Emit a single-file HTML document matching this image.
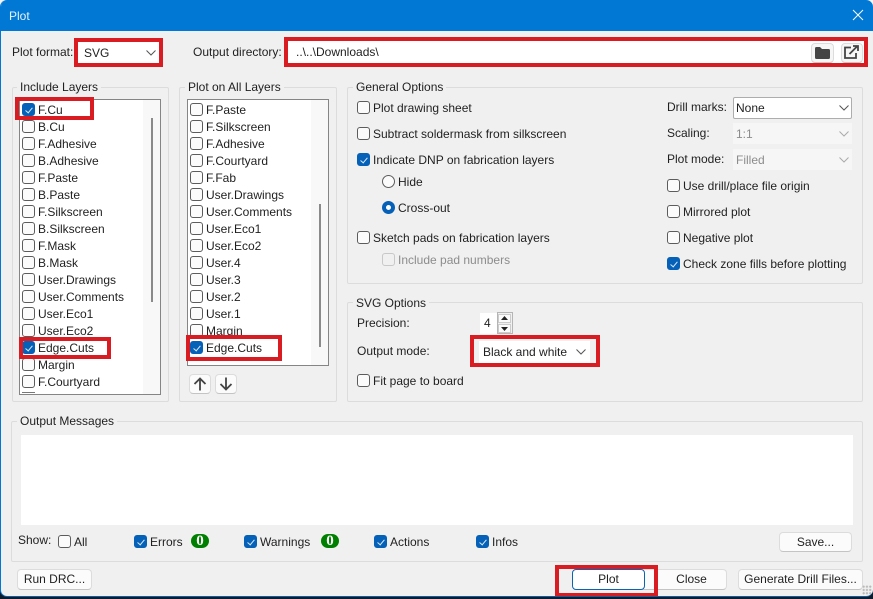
<!DOCTYPE html>
<html><head><meta charset="utf-8"><title>Plot</title>
<style>
html,body{margin:0;padding:0;width:873px;height:599px;overflow:hidden;background:linear-gradient(#f4f4f4 0,#f4f4f4 300px,#0d1b2a 300px)}
*{box-sizing:border-box}
#d{position:absolute;left:0;top:0;width:873px;height:597px;background:#f0f0f0;border-radius:7px;overflow:hidden;border-left:1px solid #0078d4;border-bottom:1px solid #0a5ea8;font-family:"Liberation Sans",sans-serif;font-size:12px;color:#1f1f1f}
#w{position:absolute;left:-1px;top:0;width:873px;height:597px}
.a{position:absolute}
.t{position:absolute;white-space:nowrap;line-height:16px;height:16px}
.c{position:absolute;width:13px;height:13px;border:1px solid #5c5c5c;border-radius:3px;background:#fbfbfb}
.c.on{background:#0560b8;border-color:#0560b8}
.c.on::after{content:"";position:absolute;left:4px;top:2px;width:3px;height:6px;border:solid #dcebf8;border-width:0 1px 1px 0;transform:rotate(40deg)}
.r{position:absolute;width:13px;height:13px;border:1px solid #5c5c5c;border-radius:50%;background:#fbfbfb}
.r.on{background:#fff;border:4px solid #0560b8}
.g{position:absolute;border:1px solid #dcdcdc;border-radius:2px}
.gl{position:absolute;background:#f0f0f0;padding:0 3px;white-space:nowrap;line-height:16px;height:16px}
.l{position:absolute;background:#fff;border:1px solid #858585;overflow:hidden}
.tr{position:absolute;top:0;bottom:0;width:18px;background:#f8f8f8}
.th{position:absolute;width:2px;background:#8a8a8a}
.cb{position:absolute;background:#fff}
.b{position:absolute;background:#fbfbfb;border:1px solid #dcdcdc;border-bottom-color:#c4c4c4;border-radius:4px;text-align:center;white-space:nowrap;line-height:19px}
.red{position:absolute;border:4px solid #d91c22}
svg{position:absolute;display:block}
.dis{color:#8c8c8c}
.bd{position:absolute;width:18px;height:14px;border-radius:7px;background:#008000;color:#fff;font-family:"Liberation Serif",serif;font-weight:bold;font-size:15px;line-height:14px;text-align:center}
</style></head><body>
<div id="d"><div id="w">
<div class="a" style="left:0;top:0;width:873px;height:31px;background:#0078d4"></div>
<div class="t" style="left:9px;top:8px;color:#e6f1fa">Plot</div>
<svg style="left:852px;top:9px" width="12" height="12" viewBox="0 0 12 12"><path d="M1 1L11 11M11 1L1 11" stroke="#fff" stroke-width="1" fill="none"/></svg>

<div class="t" style="left:12px;top:44px">Plot format:</div>
<div class="cb" style="left:78px;top:42px;width:81px;height:21px"></div>
<div class="t" style="left:84px;top:45px">SVG</div>
<svg style="left:146px;top:50px" width="10" height="6" viewBox="0 0 10 6"><path d="M.5.5L5 5L9.500.5" stroke="#555" fill="none"/></svg>
<div class="t" style="left:193px;top:44px">Output directory:</div>
<div class="cb" style="left:288px;top:41px;width:576px;height:22px"></div>
<div class="t" style="left:296px;top:44px">..\..\Downloads\</div>
<div class="b" style="left:811px;top:43px;width:23px;height:20px;background:#f6f6f6"></div>
<svg style="left:815px;top:47px" width="15" height="12" viewBox="0 0 15 12"><path d="M0 1.500Q0 0 1.500 0H5L7 2H13.500Q15 2 15 3.500V10.500Q15 12 13.500 12H1.500Q0 12 0 10.500Z" fill="#444"/></svg>
<div class="b" style="left:841px;top:43px;width:22px;height:20px;background:#f6f6f6"></div>
<svg style="left:844px;top:45px" width="15" height="14" viewBox="0 0 15 14"><path d="M7 2.500H1V13H12V8" stroke="#444" stroke-width="1.800" fill="none"/><path d="M5.500 9L13.500 1M9 1H14V6" stroke="#444" stroke-width="1.800" fill="none"/></svg>

<!-- Include Layers -->
<div class="g" style="left:12px;top:87px;width:157px;height:315px"></div>
<div class="gl" style="left:17px;top:79px">Include Layers</div>
<div class="l" style="left:19px;top:99px;width:142px;height:296px">
<div class="tr" style="left:123px"></div><div class="th" style="left:131px;top:18px;height:184px"></div>
</div>
<div class="c on" style="left:22px;top:103px"></div><div class="t" style="left:38px;top:102px">F.Cu</div>
<div class="c" style="left:22px;top:120px"></div><div class="t" style="left:38px;top:119px">B.Cu</div>
<div class="c" style="left:22px;top:137px"></div><div class="t" style="left:38px;top:136px">F.Adhesive</div>
<div class="c" style="left:22px;top:154px"></div><div class="t" style="left:38px;top:153px">B.Adhesive</div>
<div class="c" style="left:22px;top:171px"></div><div class="t" style="left:38px;top:170px">F.Paste</div>
<div class="c" style="left:22px;top:188px"></div><div class="t" style="left:38px;top:187px">B.Paste</div>
<div class="c" style="left:22px;top:205px"></div><div class="t" style="left:38px;top:204px">F.Silkscreen</div>
<div class="c" style="left:22px;top:222px"></div><div class="t" style="left:38px;top:221px">B.Silkscreen</div>
<div class="c" style="left:22px;top:239px"></div><div class="t" style="left:38px;top:238px">F.Mask</div>
<div class="c" style="left:22px;top:256px"></div><div class="t" style="left:38px;top:255px">B.Mask</div>
<div class="c" style="left:22px;top:273px"></div><div class="t" style="left:38px;top:272px">User.Drawings</div>
<div class="c" style="left:22px;top:290px"></div><div class="t" style="left:38px;top:289px">User.Comments</div>
<div class="c" style="left:22px;top:307px"></div><div class="t" style="left:38px;top:306px">User.Eco1</div>
<div class="c" style="left:22px;top:324px"></div><div class="t" style="left:38px;top:323px">User.Eco2</div>
<div class="c on" style="left:22px;top:341px"></div><div class="t" style="left:38px;top:340px">Edge.Cuts</div>
<div class="c" style="left:22px;top:358px"></div><div class="t" style="left:38px;top:357px">Margin</div>
<div class="c" style="left:22px;top:375px"></div><div class="t" style="left:38px;top:374px">F.Courtyard</div>
<div class="a" style="left:22px;top:392px;width:13px;height:1px;background:#777"></div>

<!-- Plot on all -->
<div class="g" style="left:179px;top:87px;width:158px;height:315px"></div>
<div class="gl" style="left:185px;top:79px">Plot on All Layers</div>
<div class="l" style="left:187px;top:99px;width:142px;height:267px">
<div class="tr" style="left:123px"></div><div class="th" style="left:131px;top:104px;height:143px"></div>
</div>
<div class="c" style="left:190px;top:103px"></div><div class="t" style="left:206px;top:102px">F.Paste</div>
<div class="c" style="left:190px;top:120px"></div><div class="t" style="left:206px;top:119px">F.Silkscreen</div>
<div class="c" style="left:190px;top:137px"></div><div class="t" style="left:206px;top:136px">F.Adhesive</div>
<div class="c" style="left:190px;top:154px"></div><div class="t" style="left:206px;top:153px">F.Courtyard</div>
<div class="c" style="left:190px;top:171px"></div><div class="t" style="left:206px;top:170px">F.Fab</div>
<div class="c" style="left:190px;top:188px"></div><div class="t" style="left:206px;top:187px">User.Drawings</div>
<div class="c" style="left:190px;top:205px"></div><div class="t" style="left:206px;top:204px">User.Comments</div>
<div class="c" style="left:190px;top:222px"></div><div class="t" style="left:206px;top:221px">User.Eco1</div>
<div class="c" style="left:190px;top:239px"></div><div class="t" style="left:206px;top:238px">User.Eco2</div>
<div class="c" style="left:190px;top:256px"></div><div class="t" style="left:206px;top:255px">User.4</div>
<div class="c" style="left:190px;top:273px"></div><div class="t" style="left:206px;top:272px">User.3</div>
<div class="c" style="left:190px;top:290px"></div><div class="t" style="left:206px;top:289px">User.2</div>
<div class="c" style="left:190px;top:307px"></div><div class="t" style="left:206px;top:306px">User.1</div>
<div class="c" style="left:190px;top:324px"></div><div class="t" style="left:206px;top:323px">Margin</div>
<div class="c on" style="left:190px;top:341px"></div><div class="t" style="left:206px;top:340px">Edge.Cuts</div>
<div class="b" style="left:189px;top:374px;width:22px;height:20px"></div>
<svg style="left:193px;top:377px" width="14" height="14" viewBox="0 0 14 14"><path d="M7 13.500V1.500M1.500 7L7 1.500L12.500 7" stroke="#444" stroke-width="1.800" fill="none"/></svg>
<div class="b" style="left:215px;top:374px;width:22px;height:20px"></div>
<svg style="left:219px;top:377px" width="14" height="14" viewBox="0 0 14 14"><path d="M7 .5V12.500M1.500 7L7 12.500L12.500 7" stroke="#444" stroke-width="1.800" fill="none"/></svg>

<!-- General options -->
<div class="g" style="left:347px;top:87px;width:516px;height:197px"></div>
<div class="gl" style="left:353px;top:79px">General Options</div>
<div class="c" style="left:357px;top:101px"></div><div class="t" style="left:373px;top:100px">Plot drawing sheet</div>
<div class="c" style="left:357px;top:127px"></div><div class="t" style="left:373px;top:126px">Subtract soldermask from silkscreen</div>
<div class="c on" style="left:357px;top:153px"></div><div class="t" style="left:373px;top:152px">Indicate DNP on fabrication layers</div>
<div class="r" style="left:382px;top:175px"></div><div class="t" style="left:398px;top:174px">Hide</div>
<div class="r on" style="left:382px;top:201px"></div><div class="t" style="left:398px;top:200px">Cross-out</div>
<div class="c" style="left:357px;top:231px"></div><div class="t" style="left:373px;top:230px">Sketch pads on fabrication layers</div>
<div class="c" style="left:382px;top:253px;border-color:#c8c8c8;background:#f0f0f0"></div><div class="t dis" style="left:398px;top:252px">Include pad numbers</div>

<div class="t" style="left:667px;top:99px">Drill marks:</div>
<div class="cb" style="left:733px;top:97px;width:119px;height:22px;border:1px solid #adadad;border-radius:2px"></div>
<div class="t" style="left:736px;top:100px">None</div>
<svg style="left:839px;top:105px" width="10" height="6" viewBox="0 0 10 6"><path d="M.5.5L5 5L9.500.5" stroke="#555" fill="none"/></svg>
<div class="t" style="left:667px;top:125px">Scaling:</div>
<div class="cb" style="left:733px;top:123px;width:119px;height:21px;background:#f6f6f6"></div>
<div class="t dis" style="left:736px;top:126px">1:1</div>
<svg style="left:839px;top:131px" width="10" height="6" viewBox="0 0 10 6"><path d="M.5.5L5 5L9.500.5" stroke="#aaa" fill="none"/></svg>
<div class="t" style="left:667px;top:151px">Plot mode:</div>
<div class="cb" style="left:733px;top:149px;width:119px;height:21px;background:#f6f6f6"></div>
<div class="t dis" style="left:736px;top:152px">Filled</div>
<svg style="left:839px;top:157px" width="10" height="6" viewBox="0 0 10 6"><path d="M.5.5L5 5L9.500.5" stroke="#aaa" fill="none"/></svg>
<div class="c" style="left:667px;top:179px"></div><div class="t" style="left:683px;top:178px">Use drill/place file origin</div>
<div class="c" style="left:667px;top:205px"></div><div class="t" style="left:683px;top:204px">Mirrored plot</div>
<div class="c" style="left:667px;top:231px"></div><div class="t" style="left:683px;top:230px">Negative plot</div>
<div class="c on" style="left:667px;top:257px"></div><div class="t" style="left:683px;top:256px">Check zone fills before plotting</div>

<!-- SVG options -->
<div class="g" style="left:347px;top:302px;width:516px;height:100px"></div>
<div class="gl" style="left:353px;top:295px">SVG Options</div>
<div class="t" style="left:357px;top:315px">Precision:</div>
<div class="cb" style="left:480px;top:313px;width:17px;height:21px"></div>
<div class="t" style="left:484px;top:315px">4</div>
<div class="a" style="left:497px;top:312px;width:16px;height:22px;border:1px solid #b5b5b5;background:#f0f0f0"></div>
<div class="a" style="left:498px;top:314px;width:13px;height:9px;background:#fbfbfb;border:1px solid #ccc"></div>
<div class="a" style="left:498px;top:324px;width:13px;height:9px;background:#fbfbfb;border:1px solid #ccc"></div>
<svg style="left:501px;top:316px" width="7" height="4" viewBox="0 0 7 4"><path d="M0 4L3.500 0L7 4Z" fill="#222"/></svg>
<svg style="left:501px;top:327px" width="7" height="4" viewBox="0 0 7 4"><path d="M0 0L3.500 4L7 0Z" fill="#222"/></svg>
<div class="t" style="left:357px;top:343px">Output mode:</div>
<div class="cb" style="left:479px;top:341px;width:111px;height:22px"></div>
<div class="t" style="left:483px;top:344px">Black and white</div>
<svg style="left:576px;top:349px" width="10" height="6" viewBox="0 0 10 6"><path d="M.5.5L5 5L9.500.5" stroke="#555" fill="none"/></svg>
<div class="c" style="left:357px;top:374px"></div><div class="t" style="left:373px;top:373px">Fit page to board</div>

<!-- Output messages -->
<div class="g" style="left:11px;top:421px;width:852px;height:141px"></div>
<div class="gl" style="left:17px;top:413px">Output Messages</div>
<div class="cb" style="left:21px;top:435px;width:832px;height:90px"></div>
<div class="t" style="left:18px;top:532px">Show:</div>
<div class="c" style="left:58px;top:535px"></div><div class="t" style="left:74px;top:534px">All</div>
<div class="c on" style="left:134px;top:535px"></div><div class="t" style="left:150px;top:534px">Errors</div>
<div class="bd" style="left:191px;top:534px">0</div>
<div class="c on" style="left:244px;top:535px"></div><div class="t" style="left:260px;top:534px">Warnings</div>
<div class="bd" style="left:321px;top:534px">0</div>
<div class="c on" style="left:374px;top:535px"></div><div class="t" style="left:390px;top:534px">Actions</div>
<div class="c on" style="left:476px;top:535px"></div><div class="t" style="left:492px;top:534px">Infos</div>
<div class="b" style="left:779px;top:532px;width:73px;height:20px">Save...</div>

<!-- Bottom buttons -->
<div class="b" style="left:17px;top:569px;width:75px;height:21px">Run DRC...</div>
<div class="b" style="left:640px;top:569px;width:87px;height:21px;padding-left:16px">Close</div>
<div class="b" style="left:738px;top:569px;width:125px;height:21px">Generate Drill Files...</div>
<div class="b" style="left:572px;top:569px;width:73px;height:21px;border:1px solid #0a64b4;background:#fff">Plot</div>
<div class="a" style="left:862px;top:585px;width:10px;height:10px;background-image:radial-gradient(#bbb 1px,transparent 1.200px);background-size:3.300px 3.300px"></div>

<!-- Red annotation boxes -->
<div class="red" style="left:74px;top:38px;width:89px;height:29px"></div>
<div class="red" style="left:284px;top:37px;width:584px;height:30px"></div>
<div class="red" style="left:15px;top:97px;width:79px;height:23px"></div>
<div class="red" style="left:19px;top:337px;width:92px;height:22px"></div>
<div class="red" style="left:186px;top:335px;width:96px;height:26px"></div>
<div class="red" style="left:470px;top:335px;width:130px;height:32px"></div>
<div class="red" style="left:555px;top:565px;width:103px;height:32px"></div>
</div></div>
</body></html>
